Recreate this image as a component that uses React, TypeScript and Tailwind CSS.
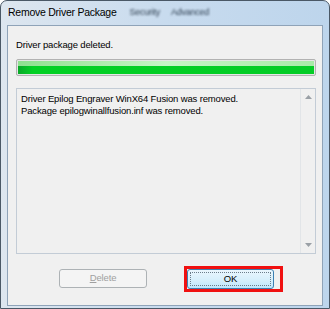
import React from "react";

export default function App() {
  const font = { fontFamily: '"Liberation Sans", Arial, sans-serif' };
  return (
    <div className="w-[330px] h-[309px] bg-white" style={font}>
      <div className="h-full flex flex-col rounded-t-[7px] border border-[#4a5866] bg-gradient-to-r from-[#dde6ef] via-[#c8dbee] to-[#bdd5ec] px-[6px] pb-[2px]">
        <div className="h-[24px] flex items-center text-[10.5px] tracking-[-0.25px] text-black relative">
          <span className="pl-[1px]">Remove Driver Package</span>
          <span className="ml-[13px] text-[9px] text-[#2e3f50] blur-[1px]">Security</span>
          <span className="ml-[11px] text-[9px] text-[#2e3f50] blur-[1px]">Advanced</span>
        </div>
        <div className="flex-1 flex flex-col bg-[#f0f0f0] border border-[#8fa3b8] text-[9.5px] tracking-[-0.15px] text-black">
          <div className="pl-[8px] pt-[12px] leading-[14px]">Driver package deleted.</div>
          <div className="ml-[8px] mt-[7px] w-[300px] h-[17px] border border-[#b2b2b2] rounded-[2px] p-[1px] bg-[#e6e6e6]">
            <div className="h-full w-full flex flex-col">
              <div className="h-[5px] bg-gradient-to-r from-[#8fe08f] via-[#c6f5c6] to-[#a8eaa8]" />
              <div className="flex-1 bg-gradient-to-r from-[#09a828] via-[#03d024] via-[5%] to-[#04cc26]" />
            </div>
          </div>
          <div className="ml-[8px] mt-[12px] w-[300px] h-[166px] border border-[#c3ccd6] flex bg-[#f0f0f0]">
            <div className="flex-1 pl-[4px] pt-[4px] leading-[12px]">
              <div>Driver Epilog Engraver WinX64 Fusion was removed.</div>
              <div>Package epilogwinallfusion.inf was removed.</div>
            </div>
            <div className="w-[15px] border-l border-[#e2e5e8] flex flex-col justify-between items-center py-[6px]">
              <svg width="7" height="4" viewBox="0 0 7 4">
                <path d="M0 4 L3.5 0 L7 4 Z" fill="#9aa0a6" />
              </svg>
              <svg width="7" height="4" viewBox="0 0 7 4">
                <path d="M0 0 L3.5 4 L7 0 Z" fill="#9aa0a6" />
              </svg>
            </div>
          </div>
          <div className="flex items-start mt-[12px] pl-[51px]">
            <div className="mt-[3px] w-[88px] h-[19px] rounded-[3px] border border-[#adb2b5] bg-[#f4f4f4] flex items-center justify-center text-[#a0a0a0]">
              <span><span className="underline">D</span>elete</span>
            </div>
            <div className="ml-[37px] w-[99px] h-[26px] border-[3px] border-[#f01010] flex items-start">
              <div className="w-[87px] h-[20px] rounded-[3px] border border-[#3c7fb1] bg-gradient-to-b from-[#eaf6fd] via-[#d9f0fc] to-[#bee6fd] p-[2px]">
                <div className="h-full w-full border border-dotted border-[#6b7c8a] flex items-center justify-center text-black">
                  OK
                </div>
              </div>
            </div>
          </div>
        </div>
      </div>
    </div>
  );
}
